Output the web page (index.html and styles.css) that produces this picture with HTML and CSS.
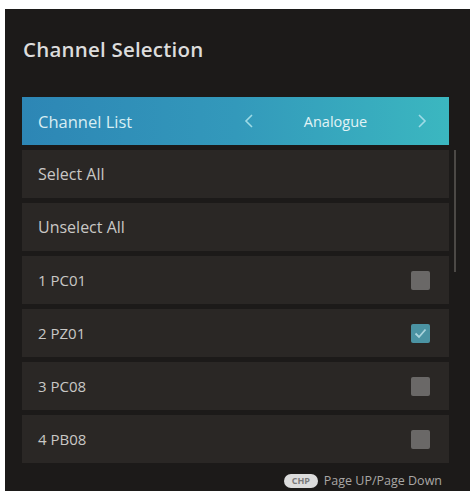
FILE: index.html
```html
<!DOCTYPE html>
<html>
<head>
<meta charset="utf-8">
<link rel="stylesheet" href="styles.css">
</head>
<body>
<div class="panel">
  <h1 class="title">Channel Selection</h1>
  <div class="bar">
    <span class="bar-label">Channel List</span>
    <div class="selector">
      <svg class="arrow" width="10" height="14" viewBox="0 0 10 14"><path d="M8 1 L2 7 L8 13" fill="none" stroke="currentColor" stroke-width="1.6"/></svg>
      <span class="value">Analogue</span>
      <svg class="arrow" width="10" height="14" viewBox="0 0 10 14"><path d="M2 1 L8 7 L2 13" fill="none" stroke="currentColor" stroke-width="1.6"/></svg>
    </div>
  </div>
  <div class="scroll">
    <div class="rows">
      <div class="row"><span class="label wide">Select All</span></div>
      <div class="row"><span class="label wide">Unselect All</span></div>
      <div class="row"><span class="label">1 PC01</span><span class="box"></span></div>
      <div class="row"><span class="label">2 PZ01</span><span class="box checked"><svg width="13" height="11" viewBox="0 0 13 11"><path d="M1.5 5.5 L5 9 L11.5 1.5" fill="none" stroke="#a9d3dc" stroke-width="1.8"/></svg></span></div>
      <div class="row"><span class="label">3 PC08</span><span class="box"></span></div>
      <div class="row"><span class="label">4 PB08</span><span class="box"></span></div>
    </div>
    <div class="track"><div class="thumb"></div></div>
  </div>
  <div class="footer">
    <span class="pill">CHP</span>
    <span class="hint">Page UP/Page Down</span>
  </div>
</div>
</body>
</html>
```
FILE: styles.css
```css
html, body {
  margin: 0;
  padding: 0;
  background: #ffffff;
}
body {
  font-family: "Open Sans", "DejaVu Sans", sans-serif;
}
.panel {
  margin: 9px 0 0 5px;
  width: 465px;
  height: 482px;
  box-sizing: border-box;
  padding: 0 13px 0 17px;
  background: #1c1a19;
  display: flex;
  flex-direction: column;
}
.title {
  margin: 0;
  padding-top: 26px;
  height: 28px;
  line-height: 28px;
  font-size: 20.5px;
  font-weight: 600;
  color: #dcdcdc;
  margin-bottom: 34px;
  padding-left: 1px;
  letter-spacing: 0.2px;
}
.bar {
  height: 48px;
  margin-right: 8px;
  background: linear-gradient(90deg, #2d86b5 0%, #3399bb 50%, #3bb7c0 100%);
  display: flex;
  align-items: center;
  padding-left: 16px;
  padding-right: 22px;
  color: #d8eef3;
}
.bar-label {
  font-size: 16.5px;
  font-weight: 500;
  flex: 1;
}
.selector {
  display: flex;
  align-items: center;
  width: 183px;
  justify-content: space-between;
  color: #9fdbe6;
}
.value {
  font-size: 14.5px;
  color: #e2f3f6;
}
.scroll {
  display: grid;
  grid-template-columns: 1fr 3px;
  column-gap: 5px;
  margin-top: 5px;
}
.rows {
  display: flex;
  flex-direction: column;
  gap: 5px;
}
.row {
  height: 48px;
  background: #2a2725;
  display: flex;
  align-items: center;
  justify-content: space-between;
  padding-left: 16px;
  padding-right: 19px;
  color: #c9c7c5;
}
.label {
  font-size: 15px;
}
.label.wide {
  font-size: 16px;
}
.box {
  width: 19px;
  height: 19px;
  background: #6a6867;
  border-radius: 2px;
  display: flex;
  align-items: center;
  justify-content: center;
}
.box.checked {
  background: #4b93a3;
}
.track {
  position: relative;
}
.thumb {
  width: 2px;
  height: 122px;
  background: #4c4946;
}
.footer {
  display: flex;
  justify-content: flex-end;
  align-items: center;
  gap: 6px;
  padding-right: 15px;
  margin-top: 9px;
}
.pill {
  width: 34px;
  height: 14px;
  border-radius: 7px;
  background: #dcdcdc;
  color: #7a7a7a;
  font-size: 9px;
  font-weight: 700;
  line-height: 14px;
  text-align: center;
}
.hint {
  font-size: 12.5px;
  color: #a9a7a5;
}
```
